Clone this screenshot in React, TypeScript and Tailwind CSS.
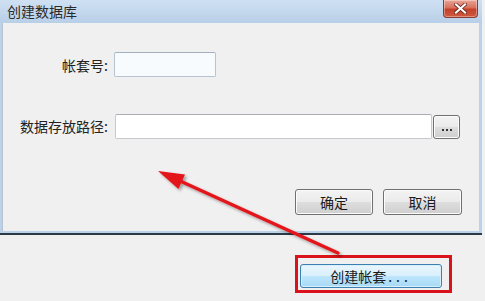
import React from "react";

const font = { fontFamily: '"Noto Sans CJK SC", "Noto Sans", sans-serif' };

function WinButton({ children, className = "" }: { children: React.ReactNode; className?: string }) {
  return (
    <div
      className={
        "flex items-center justify-center rounded-[3px] border border-[#707070] bg-[linear-gradient(#f3f3f3_0%,#ebebeb_48%,#dddddd_52%,#cfcfcf_100%)] text-[14px] text-[#1a1a1a] shadow-[inset_0_0_0_1px_#fcfcfc] " +
        className
      }
    >
      {children}
    </div>
  );
}

export default function App() {
  return (
    <div className="relative h-[301px] w-[485px] overflow-hidden bg-[#f0f0f0] leading-none" style={font}>
      {/* Dialog */}
      <div className="flex h-[235px] w-[482px] flex-col border-b-2 border-b-[#2b3a44] bg-[#bcd2ea]">
        {/* Title bar */}
        <div className="flex h-[23px] items-start justify-between bg-[linear-gradient(#cfe0f2,#b8cfe8)] pl-[7px] pr-[4px]">
          <span className="mt-[4px] text-[14px] text-[#2a2a2a]">创建数据库</span>
          <div className="flex h-[18px] w-[35px] items-center justify-center rounded-b-[4px] border border-t-0 border-[#8a3a30] bg-[linear-gradient(#e9a597_0%,#d9705c_45%,#c4402a_55%,#cf5a40_100%)] shadow-[inset_0_0_0_1px_rgba(255,255,255,0.35)]">
            <svg width="13" height="11" viewBox="0 0 13 11">
              <path d="M2 1.5 L11 9.5 M11 1.5 L2 9.5" stroke="#5a1a12" strokeWidth="3.6" strokeLinecap="square" />
              <path d="M2 1.5 L11 9.5 M11 1.5 L2 9.5" stroke="#ffffff" strokeWidth="2.2" strokeLinecap="square" />
            </svg>
          </div>
        </div>
        {/* Body */}
        <div className="ml-[2px] mr-[3px] mb-[2px] flex flex-1 flex-col border-l border-[#b8c4d0] bg-[#f0f0f0] pr-[16px]">
          {/* Row 1 */}
          <div className="mt-[29px] flex items-center">
            <span className="w-[105px] text-right text-[14px] text-[#222]">帐套号:</span>
            <div className="ml-[6px] h-[25px] w-[102px] rounded-[2px] border border-[#b5c3d2] border-t-[#a3b1c0] bg-[#f7fbfe]" />
          </div>
          {/* Row 2 */}
          <div className="mt-[36px] flex items-center">
            <span className="w-[105px] text-right text-[14px] text-[#222]">数据存放路径:</span>
            <div className="ml-[7px] h-[25px] w-[317px] rounded-[2px] border border-[#c5c9ce] border-t-[#a9adb3] bg-white" />
            <WinButton className="ml-[1px] mt-[2px] h-[24px] w-[27px]">
              <div className="mt-[6px] flex gap-[2px]">
                <div className="h-[2px] w-[2px] bg-[#333]" />
                <div className="h-[2px] w-[2px] bg-[#333]" />
                <div className="h-[2px] w-[2px] bg-[#333]" />
              </div>
            </WinButton>
          </div>
          {/* Row 3 */}
          <div className="mt-[50px] flex justify-end gap-[10px] pr-[1px]">
            <WinButton className="h-[26px] w-[78px]">确定</WinButton>
            <WinButton className="h-[26px] w-[79px]">取消</WinButton>
          </div>
        </div>
      </div>

      {/* Lower area */}
      <div className="flex justify-end pr-[43px] pt-[29px]">
        <div className="flex h-[24px] w-[142px] items-center justify-center rounded-[3px] border border-[#3c7fb1] bg-[linear-gradient(#eaf6fd_0%,#d9f0fc_48%,#bee6fd_52%,#a7d9f5_100%)] text-[14px] text-[#1a1a1a] shadow-[inset_0_0_0_1px_#d8f0fb]">
          <span>创建帐套</span>
          <span className="ml-[2px] tracking-[4px]">...</span>
        </div>
      </div>

      {/* Annotation: red box */}
      <div className="pointer-events-none absolute left-[295px] top-[255px] h-[38px] w-[157px] border-[3px] border-[#d9121b]" />

      {/* Annotation: arrow */}
      <svg className="pointer-events-none absolute left-0 top-0" width="485" height="301" viewBox="0 0 485 301">
        <defs>
          <filter id="sh" x="-20%" y="-20%" width="140%" height="140%">
            <feDropShadow dx="2" dy="2" stdDeviation="1.5" floodColor="#000" floodOpacity="0.35" />
          </filter>
        </defs>
        <g filter="url(#sh)">
          <line x1="338" y1="253" x2="178" y2="180" stroke="#e3141b" strokeWidth="3.5" strokeLinecap="round" />
          <polygon points="158,171 178.4,189.1 185,174.5" fill="#e3141b" />
        </g>
      </svg>
    </div>
  );
}
